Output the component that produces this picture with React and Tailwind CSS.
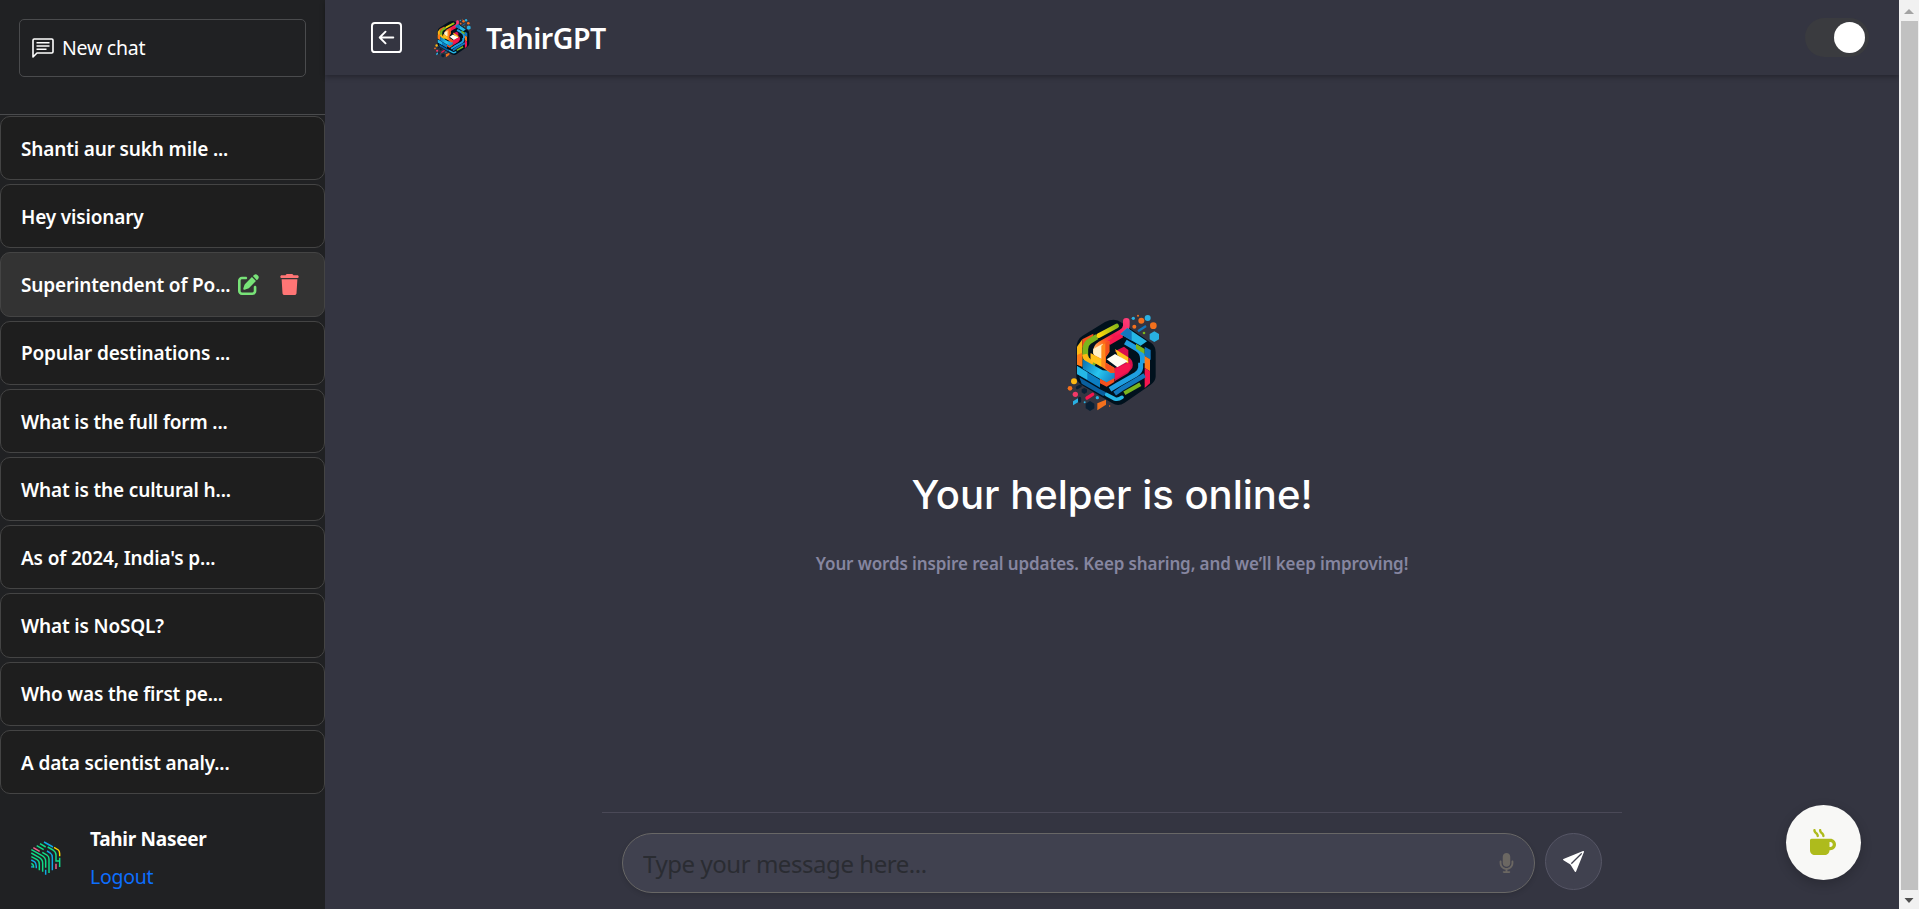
import { FaMicrophone, FaMugHot, FaPenToSquare, FaTrash } from "react-icons/fa6";
import { BsArrowLeftSquare, BsSendFill } from "react-icons/bs";

const chats = [
  "Shanti aur sukh mile ...",
  "Hey visionary",
  "Superintendent of Po...",
  "Popular destinations ...",
  "What is the full form ...",
  "What is the cultural h...",
  "As of 2024, India's p...",
  "What is NoSQL?",
  "Who was the first pe...",
  "A data scientist analy...",
];

function Brand({ className }) {
  return (
    <svg viewBox="0 0 390 375" className={className} fill="none" strokeLinejoin="round">
      <defs>
        <linearGradient id="flame" gradientUnits="userSpaceOnUse" x1="235" y1="60" x2="130" y2="160">
          <stop offset="0" stopColor="#ff3d78" />
          <stop offset=".45" stopColor="#f5164f" />
          <stop offset=".7" stopColor="#ff6a1c" />
          <stop offset="1" stopColor="#ffd98a" />
        </linearGradient>
        <linearGradient id="sky" gradientUnits="userSpaceOnUse" x1="100" y1="180" x2="200" y2="240">
          <stop offset="0" stopColor="#0a6fb0" />
          <stop offset=".5" stopColor="#27c6f0" />
          <stop offset="1" stopColor="#1277bd" />
        </linearGradient>
        <linearGradient id="lime" gradientUnits="userSpaceOnUse" x1="150" y1="108" x2="206" y2="76">
          <stop offset="0" stopColor="#ffd60a" />
          <stop offset="1" stopColor="#7fb61a" />
        </linearGradient>
      </defs>
      <path fill="#00111d" d="M79 148Q79 118 97 108L165 66Q195 52 215 68L303 128Q317 138 317 156V230Q316 244 302 254L224 308Q205 321 186 309L94 254Q79 244 79 228Z" />
      <path fill="#fdb813" d="M81 140L97 118V200L81 192Z" />
      <path fill="#f4511e" d="M97 118L130 101V124L97 143Z" />
      <path fill="#ff7a18" d="M81 165L97 158V200L81 194Z" />
      <path stroke="#7ab51d" strokeWidth="17" d="M141 110L118 124Q106 133 106 148V165Q107 180 119 187L135 196" />
      <path stroke="#fdb813" strokeWidth="15" d="M104 163Q107 179 120 187L128 191" />
      <path stroke="url(#lime)" strokeWidth="14" strokeLinecap="round" d="M146 107L200 78" />
      <path fill="#0b7fc4" d="M81 198L150 239V263L81 222Z" />
      <path fill="#25b7e6" d="M81 198L112 217V239L81 222Z" />
      <path fill="#0a5f9e" d="M88 232L150 268L174 280L160 288L95 251Z" />
      <path fill="url(#sky)" d="M98 178L158 211L195 214V236L172 250L98 206Z" />
      <path fill="#f4511e" d="M150 236L170 247L193 234V246L170 260L150 250Z" />
      <path stroke="url(#flame)" strokeWidth="20" strokeLinecap="round" d="M229 64V77Q228 91 213 99L150 135Q139 142 139 156" />
      <path stroke="#f5164f" strokeWidth="14" d="M216 106L176 129" />
      <path fill="#fff0c8" d="M130 147L158 131V180L137 170Q130 165 130 158Z" />
      <path fill="#ff8a1c" d="M154 137L178 122V156L168 170V188L194 204V219L182 219L154 200L122 180V160L154 176Z" />
      <path fill="#ffc21a" d="M122 160L154 178V200L122 182Z" />
      <path fill="#f4511e" d="M166 128L178 122V156L168 170V188L194 204V219L182 219L166 205Z" />
      <path fill="#d90f4d" d="M194 204L235 184V150L222 140L194 154L240 175Q252 186 247 203L234 220L194 244Z" />
      <path fill="#ffc21a" d="M195 147L235 172V192L202 165Z" />
      <path fill="#fffdf2" d="M170 178L195 162L234 184L202 202Z" />
      <path fill="#f5164f" d="M195 207L235 188Q249 196 235 214L195 238Z" />
      <path fill="#25b7e6" d="M232 84L291 124L272 137L211 102Z" />
      <path fill="#1277bd" d="M211 102L232 84L245 93V122Z" />
      <path stroke="#1f9fe0" strokeWidth="16" d="M226 126L262 147Q278 157 278 175V190" />
      <path fill="#7ab51d" d="M258 131L284 147V162L258 146Z" />
      <path fill="#1277bd" d="M284 140L302 150V180L284 168Z" />
      <path fill="#ff7a18" d="M284 168L300 178V214L284 204Z" />
      <path fill="#f5164f" d="M284 204L300 214V250L284 264Z" />
      <path stroke="#1f9fe0" strokeWidth="15" d="M272 188V203Q270 216 258 223L205 253L180 268" />
      <path stroke="#1277bd" strokeWidth="14" d="M284 226L220 263L194 281" />
      <path stroke="#7ab51d" strokeWidth="12" d="M223 280L271 253" />
      <path stroke="#25b7e6" strokeWidth="11" strokeLinecap="round" d="M170 284L195 297Q205 300 216 292" />
      <g fill="#f4701c">
        <circle cx="274" cy="62" r="9" />
        <circle cx="310" cy="77" r="10" />
        <circle cx="253" cy="80" r="6" />
        <circle cx="60" cy="265" r="7" />
        <path d="M142 310L168 299V314L142 331Z" />
        <circle cx="179" cy="318" r="2" />
        <circle cx="264" cy="47" r="3" />
      </g>
      <g fill="#29b0e2">
        <circle cx="293" cy="54" r="9" />
        <circle cx="250" cy="55" r="5" />
        <path d="M313 94L327 102V118L313 126L299 118V102Z" />
        <circle cx="142" cy="293" r="5" />
        <circle cx="104" cy="307" r="3" />
        <path d="M69 304L84 295V307L69 316Z" />
      </g>
      <path stroke="#1277bd" strokeWidth="7" d="M264 94L288 78" />
      <circle cx="282" cy="99" r="4" fill="#7ab51d" />
      <circle cx="72" cy="244" r="9" fill="#fdb813" />
      <circle cx="76" cy="283" r="8" fill="#f23a68" />
      <path stroke="#0a2034" strokeWidth="9" strokeLinecap="round" d="M82 263L91 258M89 304V295" />
      <path fill="#0a2034" d="M103 264L111 268V277L103 282L95 277V268ZM120 303L133 311V325L120 333L107 325V311Z" />
      <path stroke="#f5164f" strokeWidth="10" strokeLinecap="round" d="M111 294L128 283" />
    </svg>
  );
}

function Avatar({ className }) {
  return (
    <svg viewBox="0 0 90 102" className={className} fill="none" strokeWidth="4.4">
      <path
        stroke="#10dc88"
        d="M1 26L16 34L32 43Q44 49 44 60V80M1 36L24 49Q35 55 35 66V92M1 47L18 56Q25 60 25 70V88M1 67Q8 70 8 80M17 14L38 26M27 8L44 18M34 34L48 42Q54 46 54 54V96M50 18L66 27Q75 33 75 42V60H86M86 50V78"
      />
      <path stroke="#10a8e6" d="M39 3L66 18M48 30L58 36Q64 40 64 50V88M1 57L10 62Q16 66 16 82M44 86V101M3 74V80" />
      <path stroke="#f2638c" d="M7 20L26 31M75 68V84" />
      <path stroke="#ffd500" d="M69 19L82 27Q86 30 86 38V46" />
    </svg>
  );
}

function ChatIcon({ className }) {
  return (
    <svg viewBox="0 0 22 20" className={className} fill="none" stroke="currentColor" strokeWidth="1.6">
      <path strokeLinejoin="round" d="M1 19V2.2Q1 1 2.2 1H19.8Q21 1 21 2.2V13.8Q21 15 19.8 15H5Z" />
      <path d="M4.5 4.8H17.5M4.5 8H17.5M4.5 11.2H14.5" />
    </svg>
  );
}

function ChatItem({ title, active }) {
  return (
    <li
      className={`flex h-[64.2px] shrink-0 items-center rounded-[10px] border border-[#444444] pl-5 pr-[25px] ${
        active ? "bg-[#333333]" : "bg-[#1e1e1e]"
      }`}
    >
      <span className="whitespace-nowrap pt-[2px] text-[19px] font-semibold tracking-[-0.15px]">{title}</span>
      {active && (
        <span className="ml-auto flex items-center gap-[21px]">
          <FaPenToSquare className="size-[21px] text-[#78e378]" />
          <FaTrash className="h-[21px] w-[19px] text-[#ff7575]" />
        </span>
      )}
    </li>
  );
}

function Sidebar() {
  return (
    <aside className="flex w-[325px] shrink-0 flex-col bg-[#202123]">
      <div className="h-[115px] border-b border-[#4a4b4d] px-[19px] pt-[19px]">
        <button className="flex h-[58px] w-[287px] items-center gap-[8px] rounded-[5px] border border-[#4a4b4d] pl-[12px] text-[19.5px] tracking-[-0.25px]">
          <ChatIcon className="h-5 w-[22px]" />
          New chat
        </button>
      </div>
      <ul className="mt-px flex flex-col gap-1">
        {chats.map((title, i) => (
          <ChatItem key={title} title={title} active={i === 2} />
        ))}
      </ul>
      <div className="mt-[26px] flex items-center pl-[30.5px]">
        <Avatar className="h-[34px] w-[30px]" />
        <div className="ml-[29.5px] flex flex-col leading-[38px]">
          <span className="text-[19px] font-bold tracking-[-0.28px]">Tahir Naseer</span>
          <a className="text-[19.5px] tracking-[-0.25px] text-[#0d6efd]">Logout</a>
        </div>
      </div>
    </aside>
  );
}

function Header() {
  return (
    <header className="flex h-[75px] shrink-0 items-center pl-[46px] pr-[30px] shadow-[0_2px_5px_rgba(0,0,0,0.3)]">
      <BsArrowLeftSquare className="size-[31px]" />
      <Brand className="ml-[25px] h-[50px] w-[52px]" />
      <h1 className="ml-[7px] pt-[2px] text-[28.5px] font-semibold tracking-[-0.5px]">TahirGPT</h1>
      <div className="ml-auto flex h-[39px] w-[64px] items-center justify-end rounded-full bg-[#3a3b3f] pr-1">
        <div className="size-[31px] rounded-full bg-white" />
      </div>
    </header>
  );
}

function Composer() {
  return (
    <div className="mx-auto mt-auto flex h-[97px] w-[1020px] items-start gap-[10px] border-t border-[#4a4957] px-5 pt-5">
      <div className="flex h-[60px] w-[913px] items-center rounded-full border border-[#686766] bg-[#40414f] pl-5 pr-[20px] shadow-[0_2px_5px_rgba(0,0,0,0.12)]">
        <input
          className="h-full min-w-0 flex-1 bg-transparent text-[24px] tracking-[-0.45px] outline-none placeholder:text-[#2a2c32]"
          placeholder="Type your message here..."
        />
        <FaMicrophone className="h-[20px] w-[15px] text-[#6b6762]" />
      </div>
      <button className="flex size-[57px] items-center justify-center rounded-full border border-[#565666] bg-[#40414f] pb-px">
        <BsSendFill className="size-[21px]" />
      </button>
    </div>
  );
}

function Scrollbar() {
  return (
    <div className="flex w-[20px] shrink-0 flex-col items-center bg-[#f1f1f1]">
      <svg viewBox="0 0 20 21" className="h-[21px] w-5 shrink-0">
        <path fill="#a3a3a3" d="M5 14L10 9L15 14Z" />
      </svg>
      <div className="w-[17px] flex-1 bg-[#c1c1c1]" />
      <svg viewBox="0 0 20 19" className="h-[19px] w-5 shrink-0">
        <path fill="#505050" d="M5.5 8L10 13L14.5 8Z" />
      </svg>
    </div>
  );
}

export default function App() {
  return (
    <div className="flex h-[909px] w-full overflow-hidden bg-[#343541] font-['Noto_Sans',sans-serif] text-white">
      <Sidebar />
      <main className="flex min-w-0 flex-1 flex-col">
        <Header />
        <section className="flex flex-col items-center pt-[225px]">
          <Brand className="ml-[6px] h-[125px] w-[130px]" />
          <h2 className="mt-10 font-['Inter',sans-serif] text-[40px] font-medium leading-[60px]">Your helper is online!</h2>
          <p className="mt-[25px] text-[17px] font-semibold leading-7 tracking-[-0.11px] text-[#8686a0]">
            Your words inspire real updates. Keep sharing, and we’ll keep improving!
          </p>
        </section>
        <Composer />
      </main>
      <button className="fixed right-[58px] bottom-[29px] flex size-[75px] items-center justify-center rounded-full bg-[#f8f8f6] pr-px pb-[2px] shadow-[0_4px_12px_rgba(0,0,0,0.2)]">
        <FaMugHot className="size-[26px] text-[#aebb1c]" />
      </button>
      <Scrollbar />
    </div>
  );
}
